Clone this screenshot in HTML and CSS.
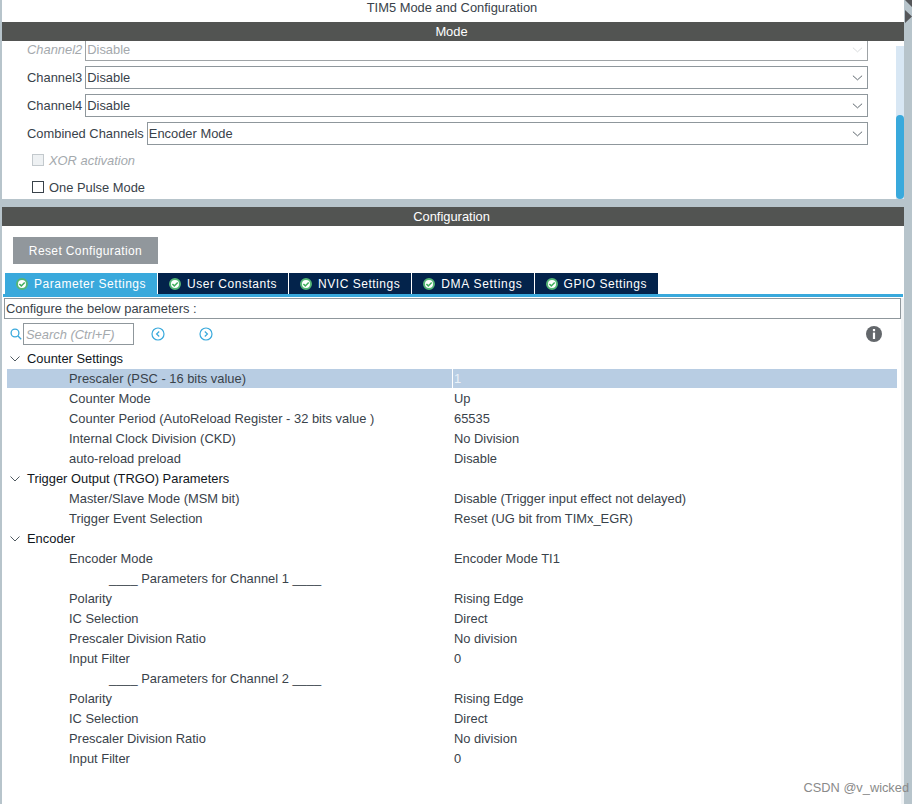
FILE: index.html
```html
<!DOCTYPE html>
<html>
<head>
  <meta charset="utf-8">
  <title>TIM5 Mode and Configuration</title>
  <link rel="stylesheet" href="styles.css">
</head>
<body>
<div class="window">
  <div class="main">
    <div class="title">TIM5 Mode and Configuration</div>
    <div class="bar">Mode</div>
    <div class="mode">
      <div class="mode-fields">
        <div class="cut">
          <div class="field disabled">
            <span class="field-label">Channel2</span>
            <div class="combo">Disable
              <svg class="arrow" viewBox="0 0 12 6"><path d="M1 .5 6 5 11 .5"/></svg>
            </div>
          </div>
        </div>
        <div class="field">
          <span class="field-label">Channel3</span>
          <div class="combo">Disable
            <svg class="arrow" viewBox="0 0 12 6"><path d="M1 .5 6 5 11 .5"/></svg>
          </div>
        </div>
        <div class="field">
          <span class="field-label">Channel4</span>
          <div class="combo">Disable
            <svg class="arrow" viewBox="0 0 12 6"><path d="M1 .5 6 5 11 .5"/></svg>
          </div>
        </div>
        <div class="field">
          <span class="field-label label-long">Combined Channels</span>
          <div class="combo">Encoder Mode
            <svg class="arrow" viewBox="0 0 12 6"><path d="M1 .5 6 5 11 .5"/></svg>
          </div>
        </div>
        <div class="check check-off"><span class="box"></span>XOR activation</div>
        <div class="check"><span class="box"></span>One Pulse Mode</div>
      </div>
      <div class="scroll"><div class="thumb"></div></div>
    </div>
    <div class="split"></div>
    <div class="bar">Configuration</div>
    <div class="config">
      <button class="reset">Reset Configuration</button>
      <div class="tabs">
        <div class="tab active"><svg class="ok" viewBox="0 0 12 12"><circle cx="6" cy="6" r="5"/><path d="M3.4 6 5.3 7.9 8.7 4.4"/></svg>Parameter Settings</div>
        <div class="tab"><svg class="ok" viewBox="0 0 12 12"><circle cx="6" cy="6" r="5"/><path d="M3.4 6 5.3 7.9 8.7 4.4"/></svg>User Constants</div>
        <div class="tab"><svg class="ok" viewBox="0 0 12 12"><circle cx="6" cy="6" r="5"/><path d="M3.4 6 5.3 7.9 8.7 4.4"/></svg>NVIC Settings</div>
        <div class="tab tab-wide"><svg class="ok" viewBox="0 0 12 12"><circle cx="6" cy="6" r="5"/><path d="M3.4 6 5.3 7.9 8.7 4.4"/></svg>DMA Settings</div>
        <div class="tab"><svg class="ok" viewBox="0 0 12 12"><circle cx="6" cy="6" r="5"/><path d="M3.4 6 5.3 7.9 8.7 4.4"/></svg>GPIO Settings</div>
      </div>
      <div class="pane">
        <div class="hint">Configure the below parameters :</div>
        <div class="tools">
          <svg class="lens" viewBox="0 0 12 12"><circle cx="5" cy="5" r="3.9"/><path d="M8 8 11.2 11.2"/></svg>
          <div class="search">Search (Ctrl+F)</div>
          <svg class="nav nav-prev" viewBox="0 0 14 14"><circle cx="7" cy="7" r="6"/><path d="M8.2 4.5 5.6 7 8.2 9.5"/></svg>
          <svg class="nav nav-next" viewBox="0 0 14 14"><circle cx="7" cy="7" r="6"/><path d="M5.8 4.5 8.4 7 5.8 9.5"/></svg>
          <svg class="info" viewBox="0 0 16 16"><circle cx="8" cy="8" r="8"/><rect x="6.9" y="3" width="2.2" height="2.2"/><rect x="6.9" y="6.6" width="2.2" height="6.4"/></svg>
        </div>
        <div class="tree">
          <div class="group"><svg class="twist" viewBox="0 0 10 6"><path d="M.5 .5 5 5 9.5 .5"/></svg>Counter Settings</div>
          <div class="row selected"><span class="name">Prescaler (PSC - 16 bits value)</span><span class="value">1</span></div>
          <div class="row"><span class="name">Counter Mode</span><span class="value">Up</span></div>
          <div class="row"><span class="name">Counter Period (AutoReload Register - 32 bits value )</span><span class="value">65535</span></div>
          <div class="row"><span class="name">Internal Clock Division (CKD)</span><span class="value">No Division</span></div>
          <div class="row"><span class="name">auto-reload preload</span><span class="value">Disable</span></div>
          <div class="group"><svg class="twist" viewBox="0 0 10 6"><path d="M.5 .5 5 5 9.5 .5"/></svg>Trigger Output (TRGO) Parameters</div>
          <div class="row"><span class="name">Master/Slave Mode (MSM bit)</span><span class="value">Disable (Trigger input effect not delayed)</span></div>
          <div class="row"><span class="name">Trigger Event Selection</span><span class="value">Reset (UG bit from TIMx_EGR)</span></div>
          <div class="group"><svg class="twist" viewBox="0 0 10 6"><path d="M.5 .5 5 5 9.5 .5"/></svg>Encoder</div>
          <div class="row"><span class="name">Encoder Mode</span><span class="value">Encoder Mode TI1</span></div>
          <div class="row"><span class="name sub">____ Parameters for Channel 1 ____</span></div>
          <div class="row"><span class="name">Polarity</span><span class="value">Rising Edge</span></div>
          <div class="row"><span class="name">IC Selection</span><span class="value">Direct</span></div>
          <div class="row"><span class="name">Prescaler Division Ratio</span><span class="value">No division</span></div>
          <div class="row"><span class="name">Input Filter</span><span class="value">0</span></div>
          <div class="row"><span class="name sub">____ Parameters for Channel 2 ____</span></div>
          <div class="row"><span class="name">Polarity</span><span class="value">Rising Edge</span></div>
          <div class="row"><span class="name">IC Selection</span><span class="value">Direct</span></div>
          <div class="row"><span class="name">Prescaler Division Ratio</span><span class="value">No division</span></div>
          <div class="row"><span class="name">Input Filter</span><span class="value">0</span></div>
        </div>
      </div>
    </div>
  </div>
  <div class="gutter"><svg class="gutter-arrow" viewBox="0 0 8 24"><path d="M1 0H8V7ZM1 10 8 16.5 1 23Z"/></svg></div>
</div>
<div class="mark">CSDN @v_wicked</div>
</body>
</html>
```

FILE: styles.css
```css
html, body {
  margin: 0;
  padding: 0;
  background: #fff;
  color: #39424a;
  font: 12.9px "Liberation Sans", Arial, sans-serif;
}
body { height: 804px; overflow: hidden; }

.window {
  display: flex;
  width: 912px;
  height: 804px;
  background: linear-gradient(to right, #b7c4cb 2px, transparent 2px);
}
.main { width: 902px; margin-left: 2px; }
.gutter { width: 8px; background: #b7c4cb; }
.gutter-arrow { display: block; width: 8px; height: 24px; fill: #55575a; }

.title { height: 22px; line-height: 15px; padding-right: 2px; text-align: center; }
.bar {
  height: 19px;
  line-height: 19px;
  padding-right: 3px;
  background: #525452;
  color: #fff;
  text-align: center;
}

.mode { display: flex; height: 158px; overflow: hidden; }
.mode-fields { flex: 1; padding-left: 25px; }
.cut { height: 20px; overflow: hidden; margin-bottom: 5px; }
.cut .field { margin-top: -3px; }
.field { display: flex; align-items: center; height: 23px; margin-bottom: 5px; }
.field-label { padding-right: 3px; white-space: nowrap; line-height: 23px; }
.combo {
  position: relative;
  flex: 1;
  margin-right: 28px;
  height: 21px;
  line-height: 21px;
  padding-left: 1px;
  border: 1px solid #8f979c;
  background: #fff;
}
.arrow {
  position: absolute;
  right: 4px;
  top: 8px;
  width: 11px;
  height: 6px;
  fill: none;
  stroke: #505a61;
}
.disabled { color: #a4a9ad; }
.disabled .field-label { font-style: italic; }
.disabled .combo { border-color: #9ea3a6; }
.disabled .arrow { stroke: #d5d8da; }

.check { display: flex; align-items: center; height: 20px; margin-bottom: 7px; padding-left: 5px; }
.box {
  width: 10px;
  height: 10px;
  margin-right: 5px;
  border: 1px solid #39424a;
}
.check-off { color: #a4a9ad; font-style: italic; }
.check-off .box { border-color: #c3c9cd; background: #eef1f3; }

.scroll { width: 8px; margin-top: 5px; background: #d8e7f4; }
.thumb { height: 84px; margin-top: 69px; background: #39a9dc; border-radius: 4px; }

.split { height: 8px; background: #b7c4cb; }

.reset {
  display: block;
  width: 145px;
  height: 27px;
  margin: 11px 0 9px 11px;
  padding: 0;
  border: 0;
  background: #91979c;
  color: #fff;
  font: 12px "Liberation Sans", Arial, sans-serif;
  letter-spacing: .38px;
}
.tabs {
  display: flex;
  height: 21px;
  margin: 0 1px;
  padding-left: 2px;
  border-bottom: 3px solid #39a9dc;
}
.tab {
  display: flex;
  align-items: center;
  height: 21px;
  padding: 0 11px;
  margin-right: 1px;
  background: #03234b;
  color: #fff;
  font-size: 12px;
  letter-spacing: .52px;
  white-space: nowrap;
}
.tab.active { background: #39a9dc; }
.tab-wide { letter-spacing: .72px; }
.ok { width: 12px; height: 12px; margin-right: 6px; }
.ok circle { fill: #fff; stroke: #55b676; stroke-width: 2; }
.ok path { fill: none; stroke: #3fae5c; stroke-width: 1.5; }

.pane { border-right: 3px solid #f0f3f5; height: 507px; }
.hint {
  height: 19px;
  line-height: 19px;
  margin-top: 1px;
  margin-left: 2px;
  padding-left: 1px;
  border: 1px solid #8f979c;
}

.tools { display: flex; align-items: center; height: 29px; padding-left: 8px; }
.lens { width: 12px; height: 12px; fill: none; stroke: #39a9dc; stroke-width: 1.3; }
.search {
  box-sizing: border-box;
  width: 111px;
  height: 22px;
  line-height: 21px;
  margin-left: 1px;
  padding-left: 2px;
  border: 1px solid #8f979c;
  color: #a4a9ad;
  font-style: italic;
  white-space: nowrap;
}
.nav { width: 14px; height: 14px; fill: none; stroke: #39a9dc; stroke-width: 1.2; }
.nav-prev { margin-left: 17px; }
.nav-next { margin-left: 34px; }
.info { width: 16px; height: 16px; margin-left: auto; margin-right: 19px; }
.info circle { fill: #63676b; }
.info rect { fill: #fff; }

.tree { margin: 0 4px 0 5px; }
.group, .row { box-sizing: border-box; height: 20px; padding-top: 1px; line-height: 19px; white-space: nowrap; }
.group { display: flex; align-items: center; color: #10161c; padding-left: 3px; }
.twist { width: 10px; height: 6px; margin-right: 7px; fill: none; stroke: #505a61; }
.row { display: flex; }
.name {
  box-sizing: border-box;
  flex: none;
  width: 446px;
  padding-left: 62px;
  border-right: 1px solid transparent;
}
.name.sub { padding-left: 102px; }
.value { padding-left: 1px; }
.selected { padding-top: 0; border-top: 1px solid #fff; background: #b8cde3; }
.selected .name { border-right-color: #fff; }
.selected .value { color: #eaf1f8; }

.mark {
  position: absolute;
  right: 15px;
  bottom: 9px;
  color: #8a8a8a;
  font-size: 12.8px;
}
```
